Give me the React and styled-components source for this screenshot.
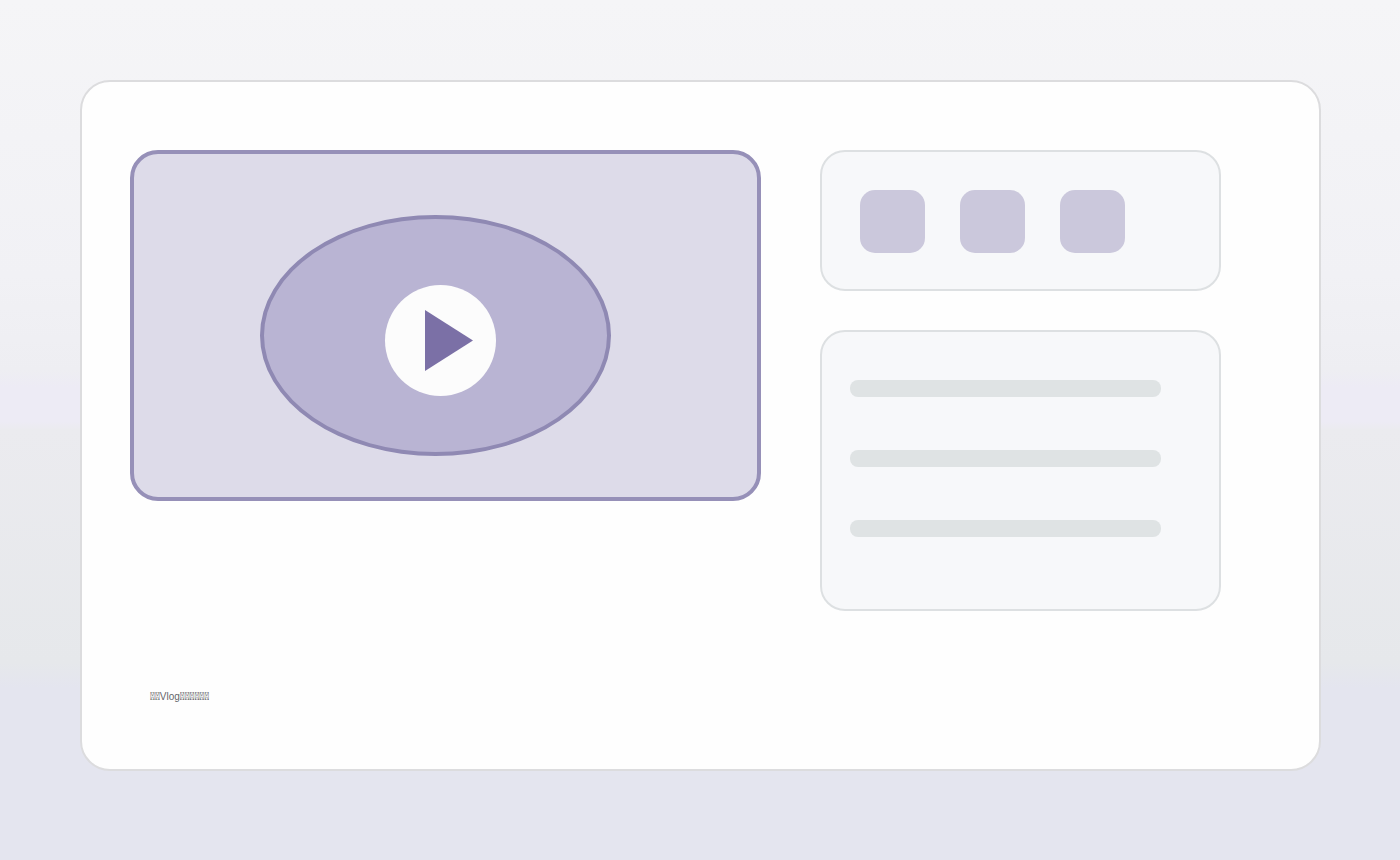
import React from "react";
import styled, { createGlobalStyle } from "styled-components";

const GlobalStyle = createGlobalStyle`
  *, *::before, *::after { box-sizing: border-box; }
  body { margin: 0; background: #e4e5ee; }
`;

const Page = styled.div`
  display: flex;
  min-height: 100vh;
  padding: 80px 79px 89px 80px;
  background: linear-gradient(
    180deg,
    #f5f5f7 0%,
    #f1f1f5 32%,
    #eeeef2 43%,
    #edebf5 45%,
    #edebf5 49%,
    #ebebef 50%,
    #e6e8eb 77%,
    #e4e5ef 80%,
    #e4e5ef 100%
  );
`;

const Card = styled.main`
  display: flex;
  flex: 1;
  flex-direction: column;
  gap: 80px;
  padding: 68px 98px 48px 48px;
  border: 2px solid #dcdcde;
  border-radius: 30px;
  background: #fefefe;
`;

const Columns = styled.div`
  display: grid;
  grid-template-columns: minmax(0, 631fr) minmax(0, 401fr);
  align-items: start;
  gap: 59px;
`;

const Video = styled.section`
  display: flex;
  min-height: 351px;
  padding: 61px 126px 41px;
  border: 4px solid #9690b8;
  border-radius: 28px;
  background: #dddbe9;
`;

const Lens = styled.div`
  flex: 0 0 351px;
  height: 241px;
  padding: 66px 0 0 121px;
  border: 4px solid #8f89b3;
  border-radius: 50%;
  background: #b9b4d3;
`;

const PlayButton = styled.button`
  display: flex;
  align-items: center;
  width: 111px;
  height: 111px;
  padding: 0 0 0 40px;
  border: 0;
  border-radius: 50%;
  background: #fcfcfc;
  cursor: pointer;
`;

const PlayIcon = styled.svg`
  flex: none;
  width: 48px;
  height: 61px;
  fill: #7b70a6;
`;

const Sidebar = styled.aside`
  display: flex;
  flex-direction: column;
  gap: 39px;
`;

const Panel = styled.section`
  display: flex;
  flex-direction: ${(p) => (p.$stacked ? "column" : "row")};
  gap: ${(p) => (p.$stacked ? "53px" : "35px")};
  min-height: ${(p) => (p.$stacked ? "281px" : "141px")};
  padding: ${(p) => (p.$stacked ? "48px 58px 48px 28px" : "38px 38px 36px")};
  border: 2px solid #dde0e2;
  border-radius: 25px;
  background: #f7f8fa;
`;

const Tile = styled.div`
  width: 65px;
  height: 63px;
  border-radius: 15px;
  background: #cbc8dc;
`;

const Line = styled.div`
  height: 17px;
  border-radius: 8px;
  background: #dfe3e4;
`;

const Caption = styled.p`
  margin: 0;
  padding-left: 20px;
  color: #65656a;
  font: 10px/12px "Liberation Sans", Arial, sans-serif;
`;

const Missing = styled.span`
  color: #222226;
  font-family: Roboto, sans-serif;
  font-size: 11px;
  font-weight: 700;
`;

export default function App() {
  return (
    <>
      <GlobalStyle />
      <Page>
        <Card>
          <Columns>
            <Video aria-label="Video">
              <Lens>
                <PlayButton type="button" aria-label="Play">
                  <PlayIcon viewBox="0 0 48 61" aria-hidden="true">
                    <path d="M0 0 48 30.5 0 61Z" />
                  </PlayIcon>
                </PlayButton>
              </Lens>
            </Video>
            <Sidebar>
              <Panel>
                <Tile />
                <Tile />
                <Tile />
              </Panel>
              <Panel $stacked>
                <Line />
                <Line />
                <Line />
              </Panel>
            </Sidebar>
          </Columns>
          <Caption>
            <Missing>{"\uE0F0\uE0F0"}</Missing>Vlog
            <Missing>{"\uE0F0\uE0F0\uE0F0\uE0F0\uE0F0\uE0F0"}</Missing>
          </Caption>
        </Card>
      </Page>
    </>
  );
}
